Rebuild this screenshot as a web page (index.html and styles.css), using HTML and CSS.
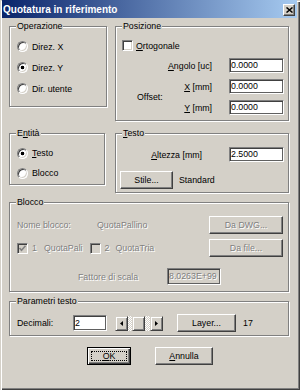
FILE: index.html
```html
<!DOCTYPE html>
<html>
<head>
<meta charset="utf-8">
<link rel="stylesheet" href="styles.css">
</head>
<body>
<div class="window">
  <div class="titlebar">
    <span class="title">Quotatura in riferimento</span>
    <span class="close"><svg width="7" height="6" viewBox="0 0 7 6"><path d="M0.5 0.5 L6.5 5.5 M6.5 0.5 L0.5 5.5" stroke="#000" stroke-width="1.5"/></svg></span>
  </div>
  <div class="content">
    <div class="row row1">
      <div class="group g-oper">
        <span class="legend">Operazione</span>
        <div class="opt-list">
          <div class="opt"><span class="radio"></span><span>Direz. X</span></div>
          <div class="opt"><span class="radio on"></span><span>Direz. Y</span></div>
          <div class="opt"><span class="radio"></span><span>Dir. utente</span></div>
        </div>
      </div>
      <div class="group g-pos">
        <span class="legend">Posizione</span>
        <div class="check-row"><span class="check"></span><span><u>O</u>rtogonale</span></div>
        <div class="pos-grid">
          <span class="lbl row-a"><u>A</u>ngolo [uc]</span><span class="edit cell-a">0.0000</span>
          <span class="offset">Offset:</span>
          <span class="lbl row-b"><u>X</u> [mm]</span><span class="edit cell-b">0.0000</span>
          <span class="lbl row-c"><u>Y</u> [mm]</span><span class="edit cell-c">0.0000</span>
        </div>
      </div>
    </div>
    <div class="row row2">
      <div class="group g-ent">
        <span class="legend">E<u>n</u>tità</span>
        <div class="opt-list ent-list">
          <div class="opt"><span class="radio on"></span><span><u>T</u>esto</span></div>
          <div class="opt"><span class="radio"></span><span>Blocco</span></div>
        </div>
      </div>
      <div class="group g-testo">
        <span class="legend"><u>T</u>esto</span>
        <div class="t-row1"><span class="t-lbl"><u>A</u>ltezza [mm]</span><span class="edit">2.5000</span></div>
        <div class="t-row2"><span class="btn stile">Stile...</span><span class="std">Standard</span></div>
      </div>
    </div>
    <div class="group g-blocco">
      <span class="legend">Blocco</span>
      <div class="b-row b-row1">
        <span class="dis b-name">Nome blocco:</span>
        <span class="dis">QuotaPallino</span>
        <span class="btn dis b-btn">Da DWG...</span>
      </div>
      <div class="b-row b-row2">
        <span class="check dcheck"><svg width="9" height="9" viewBox="0 0 9 9"><path d="M1.5 4 L3.5 6.2 L7.5 1.8" fill="none" stroke="#808080" stroke-width="1.6"/></svg></span>
        <span class="dis n1">1</span>
        <span class="dis q1">QuotaPali</span>
        <span class="check dcheck c2"></span>
        <span class="dis n2">2</span>
        <span class="dis q2">QuotaTria</span>
        <span class="btn dis b-btn">Da file...</span>
      </div>
      <div class="b-row b-row3">
        <span class="dis b-scale">Fattore di scala</span>
        <span class="edit dedit dis">8.0263E+99</span>
      </div>
    </div>
    <div class="group g-par">
      <span class="legend">Parametri testo</span>
      <div class="p-row">
        <span class="p-lbl">Decimali:</span>
        <span class="edit p-edit">2</span>
        <div class="scroll">
          <span class="sbtn"><svg width="3" height="5" viewBox="0 0 3 5"><path d="M3 0 L0 2.5 L3 5 Z" fill="#000"/></svg></span>
          <span class="track"><span class="thumb"></span></span>
          <span class="sbtn"><svg width="3" height="5" viewBox="0 0 3 5"><path d="M0 0 L3 2.5 L0 5 Z" fill="#000"/></svg></span>
        </div>
        <span class="btn layer">Layer...</span>
        <span class="p-num">17</span>
      </div>
    </div>
    <div class="actions">
      <span class="btn default ok"><span><u>O</u>K</span></span>
      <span class="btn annulla"><span><u>A</u>nnulla</span></span>
    </div>
  </div>
</div>
</body>
</html>
```

FILE: styles.css
```css
html, body {
  margin: 0;
  padding: 0;
  background: #d4d0c8;
}

.window {
  width: 300px;
  height: 390px;
  box-sizing: border-box;
  background: #d4d0c8;
  box-shadow: inset 1px 1px 0 #d4d0c8, inset 2px 2px 0 #fff, inset -1px -1px 0 #404040, inset -2px -2px 0 #808080;
  font-family: "Liberation Sans", Arial, sans-serif;
  font-size: 8.8px;
  color: #000;
  overflow: hidden;
}

.titlebar {
  height: 18px;
  margin: 0 3px 0 2px;
  background: linear-gradient(to right, #0a246a, #a6caf0);
  display: flex;
  align-items: center;
  padding: 0 2px 0 1px;
}

.title {
  color: #fff;
  font-weight: bold;
  font-size: 10px;
  flex: 1;
}

.close {
  width: 12px;
  height: 12px;
  box-sizing: border-box;
  align-self: flex-start;
  margin-top: 4px;
  background: #d4d0c8;
  border: 1px solid;
  border-color: #fff #404040 #404040 #fff;
  box-shadow: inset -1px -1px 0 #808080;
  display: flex;
  align-items: center;
  justify-content: center;
}

.content {
  padding: 0 11px 0 9px;
}

.row {
  display: flex;
  align-items: flex-start;
}

.row1 {
  margin-top: 8px;
  gap: 8px;
}

.row2 {
  margin-top: 12px;
  gap: 10px;
}

.group {
  position: relative;
  box-sizing: border-box;
  border: 1px solid #808080;
  box-shadow: inset 1px 1px 0 #fff, 1px 1px 0 #fff;
}

.legend {
  position: absolute;
  top: -6px;
  left: 6px;
  padding: 0 1px;
  line-height: 11px;
  background: #d4d0c8;
  white-space: nowrap;
}

.g-oper { width: 98px; height: 81px; }
.g-pos { width: 174px; height: 95px; }
.g-ent { width: 96px; height: 52px; }
.g-testo { width: 174px; height: 60px; }
.g-blocco { width: 280px; height: 90px; margin-top: 9px; }
.g-par { width: 280px; height: 35px; margin-top: 9px; }

.opt-list {
  padding: 9px 0 0 7px;
  display: flex;
  flex-direction: column;
}

.opt {
  height: 21px;
  display: flex;
  align-items: center;
  gap: 4px;
}

.ent-list .opt {
  height: 20px;
}

.radio {
  flex: none;
  width: 11px;
  height: 11px;
  box-sizing: border-box;
  border-radius: 50%;
  background: #fff;
  border: 1px solid;
  border-color: #808080 #fff #fff #808080;
  box-shadow: inset 1px 1px 0 #404040, inset -1px -1px 0 #d4d0c8;
}

.radio.on {
  background: radial-gradient(circle, #000 0, #000 1.6px, #fff 2.1px);
}

.check {
  flex: none;
  width: 11px;
  height: 11px;
  box-sizing: border-box;
  background: #fff;
  border: 1px solid;
  border-color: #808080 #fff #fff #808080;
  box-shadow: inset 1px 1px 0 #404040, inset -1px -1px 0 #d4d0c8;
  display: flex;
  align-items: center;
  justify-content: center;
}

.check-row {
  margin: 13px 0 0 6px;
  height: 11px;
  display: flex;
  align-items: center;
  gap: 3px;
}

.pos-grid {
  margin: 4px 0 0 21px;
  display: grid;
  grid-template-columns: 27px 65px 55px;
  grid-template-rows: 21px 21px 21px;
}

.lbl {
  grid-column: 2;
  text-align: right;
  padding-right: 17px;
  align-self: center;
  white-space: nowrap;
}

.row-a { grid-row: 1; }
.row-b { grid-row: 2; }
.row-c { grid-row: 3; }
.cell-a { grid-row: 1; grid-column: 3; }
.cell-b { grid-row: 2; grid-column: 3; }
.cell-c { grid-row: 3; grid-column: 3; }

.offset {
  grid-column: 1;
  grid-row: 2 / span 2;
  align-self: center;
}

.edit {
  box-sizing: border-box;
  width: 55px;
  height: 15px;
  margin-top: 3px;
  align-self: start;
  background: #fff;
  border: 1px solid;
  border-color: #808080 #fff #fff #808080;
  box-shadow: inset 1px 1px 0 #404040, inset -1px -1px 0 #606060;
  padding-left: 1px;
  line-height: 13px;
  white-space: nowrap;
}

.t-row1 {
  margin-top: 13px;
  padding-right: 4px;
  display: flex;
  justify-content: flex-end;
  align-items: center;
}

.t-row1 .edit {
  margin-top: 0;
}

.t-lbl {
  margin-right: 27px;
}

.t-row2 {
  margin-top: 9px;
  padding-left: 4px;
  display: flex;
  align-items: center;
}

.btn {
  box-sizing: border-box;
  display: flex;
  align-items: center;
  justify-content: center;
  background: #d4d0c8;
  border: 1px solid;
  border-color: #fff #404040 #404040 #fff;
  box-shadow: inset -1px -1px 0 #808080;
  white-space: nowrap;
}

.stile {
  width: 53px;
  height: 18px;
}

.std {
  margin-left: 6px;
}

.dis {
  color: #808080;
  text-shadow: 1px 1px 0 #fff;
}

.b-row {
  display: flex;
  align-items: center;
  padding: 0 5px 0 7px;
}

.b-row1 {
  margin-top: 13px;
  height: 18px;
}

.b-name {
  width: 80px;
}

.b-btn {
  margin-left: auto;
  width: 74px;
  height: 18px;
}

.b-row2 {
  margin-top: 5px;
  height: 18px;
}

.dcheck {
  background: #d4d0c8;
}

.n1 { margin-left: 4px; }
.q1 { margin-left: 7px; }
.c2 { margin-left: 7px; }
.n2 { margin-left: 4px; }
.q2 { margin-left: 6px; }

.b-row3 {
  margin-top: 11px;
  height: 17px;
  padding-left: 68px;
}

.b-scale {
  width: 89px;
}

.dedit {
  width: 54px;
  height: 17px;
  margin-top: 0;
  align-self: center;
  background: #d4d0c8;
  line-height: 15px;
}

.p-row {
  margin-top: 12px;
  height: 18px;
  padding-left: 7px;
  display: flex;
  align-items: center;
}

.p-lbl {
  width: 56px;
}

.p-edit {
  width: 34px;
  height: 16px;
  margin-top: 0;
  align-self: center;
  line-height: 14px;
}

.scroll {
  margin-left: 8px;
  display: flex;
  height: 15px;
}

.sbtn {
  box-sizing: border-box;
  width: 13px;
  height: 15px;
  background: #d4d0c8;
  border: 1px solid;
  border-color: #d4d0c8 #404040 #404040 #d4d0c8;
  box-shadow: inset 1px 1px 0 #fff, inset -1px -1px 0 #808080;
  display: flex;
  align-items: center;
  justify-content: center;
}

.track {
  width: 22px;
  height: 15px;
  background-color: #fff;
  background-image: repeating-conic-gradient(#d4d0c8 0 25%, #fff 0 50%);
  background-size: 2px 2px;
  display: flex;
  padding-left: 4px;
  box-sizing: border-box;
}

.thumb {
  box-sizing: border-box;
  width: 13px;
  height: 15px;
  background: #d4d0c8;
  border: 1px solid;
  border-color: #d4d0c8 #404040 #404040 #d4d0c8;
  box-shadow: inset 1px 1px 0 #fff, inset -1px -1px 0 #808080;
}

.layer {
  margin-left: 14px;
  width: 59px;
  height: 18px;
}

.p-num {
  margin-left: 7px;
}

.actions {
  margin-top: 11px;
  display: flex;
  padding-left: 78px;
}

.ok {
  width: 44px;
  height: 18px;
}

.default {
  border: 1px solid #000;
  box-shadow: inset 1px 1px 0 #fff, inset -1px -1px 0 #404040, inset -2px -2px 0 #808080;
  outline: 1px dotted #000;
  outline-offset: -5px;
}

.annulla {
  margin-left: 24px;
  width: 58px;
  height: 18px;
}
```
